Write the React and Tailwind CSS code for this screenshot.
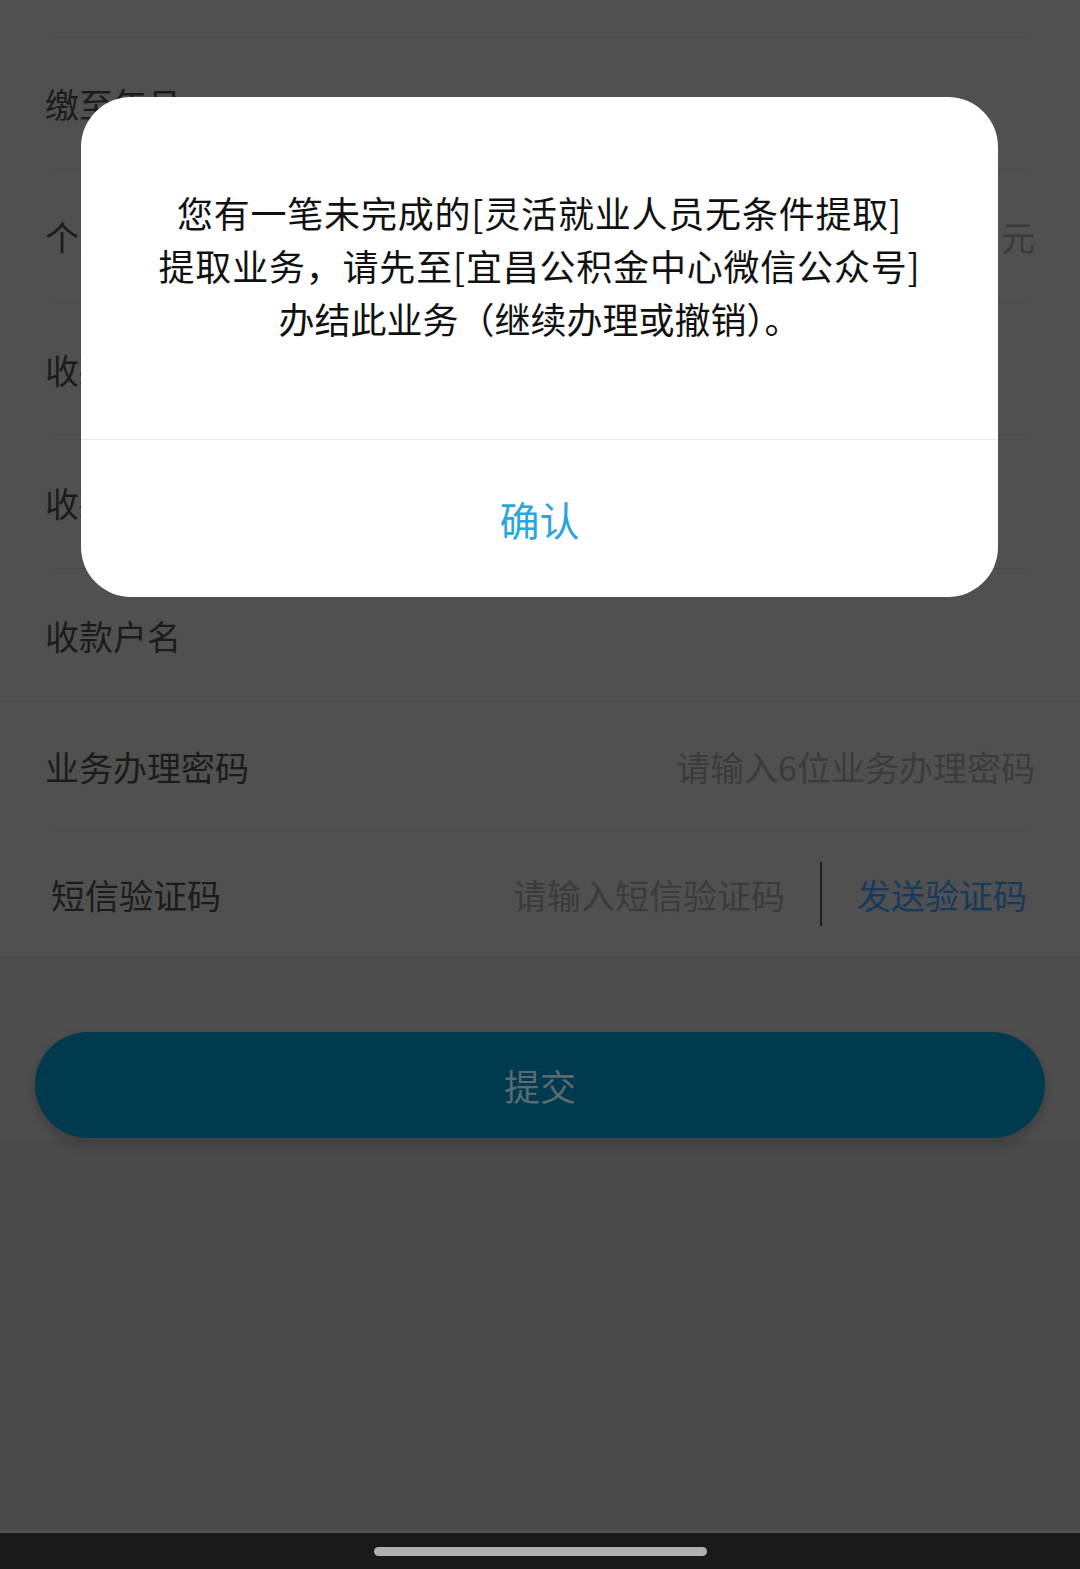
import React from "react";

const rowsTop = [
  { label: "缴至年月", value: "" },
  { label: "个人提取金额", value: "元", unit: true },
  { label: "收款银行", value: "" },
  { label: "收款账号", value: "" },
  { label: "收款户名", value: "" },
];

const Divider = ({ full }) => (
  <div className={full ? "h-px bg-[#464646]" : "mx-[55px] h-px bg-[#474747]"} />
);

const Row = ({ label, value, unit, h = "h-[132px]" }) => (
  <div className={`${h} flex items-center justify-between px-[45px] bg-[#505050]`}>
    <span className="text-[34px] text-[#1b1b1b]">{label}</span>
    {value && (
      <span className={`text-[34px] ${unit ? "text-[#3a3a3a]" : "text-[#3b3b3b]"}`}>{value}</span>
    )}
  </div>
);

const AlertModal = () => (
  <div className="absolute left-[81px] top-[97px] w-[917px] overflow-hidden rounded-[50px] bg-white">
    <div className="flex h-[342px] flex-col items-center justify-center pb-[6px] text-center text-[36px] leading-[53px] text-[#111] tracking-[0.8px]">
      <p>您有一笔未完成的[灵活就业人员无条件提取]</p>
      <p>提取业务，请先至[宜昌公积金中心微信公众号]</p>
      <p className="tracking-[0px]">办结此业务（继续办理或撤销）。</p>
    </div>
    <div className="h-px bg-[#ececec]" />
    <div className="flex h-[157px] items-center justify-center">
      <span className="text-[40px] text-[#2ba6dd]">确认</span>
    </div>
  </div>
);

export default function App() {
  return (
    <div
      className="relative flex h-[1569px] w-[1080px] flex-col overflow-hidden bg-[#4a4a4a]"
      style={{ fontFamily: '"Noto Sans CJK SC", "Noto Sans", sans-serif' }}
    >
      <div className="flex-1">
        <div className="h-[36px] bg-[#505050]" />
        <div className="bg-[#505050]">
          {rowsTop.map((r) => (
            <div key={r.label}>
              <Divider />
              <Row {...r} />
            </div>
          ))}
        </div>
        <Divider full />
        <div className="bg-[#505050]">
          <div className="flex h-[128px] items-center justify-between px-[45px]">
            <span className="text-[34px] text-[#1b1b1b]">业务办理密码</span>
            <span className="text-[34px] text-[#3b3b3b]">请输入6位业务办理密码</span>
          </div>
          <Divider />
          <div className="flex h-[126px] items-center pl-[51px] pr-[53px]">
            <span className="text-[34px] text-[#1b1b1b]">短信验证码</span>
            <span className="ml-auto text-[34px] text-[#3b3b3b]">请输入短信验证码</span>
            <div className="mx-[35px] h-[64px] w-[2px] bg-[#1e1e1e]" />
            <span className="text-[34px] text-[#173a5c]">发送验证码</span>
          </div>
        </div>
        <Divider full />
        <div className="bg-[#4e4e4e] px-[35px] pt-[74px] pb-[2px]">
          <button className="flex h-[106px] w-full items-center justify-center rounded-full bg-[#003a4f] shadow-[0_6px_14px_rgba(0,0,0,0.22)]">
            <span className="text-[36px] text-[#5b6a70]">提交</span>
          </button>
        </div>
      </div>
      <div className="h-[3px] bg-[#535353]" />
      <div className="flex h-[36px] items-center justify-center bg-[#1a1a1a]">
        <div className="h-[9px] w-[333px] rounded-full bg-[#b0b0b0]" />
      </div>
      <AlertModal />
    </div>
  );
}
